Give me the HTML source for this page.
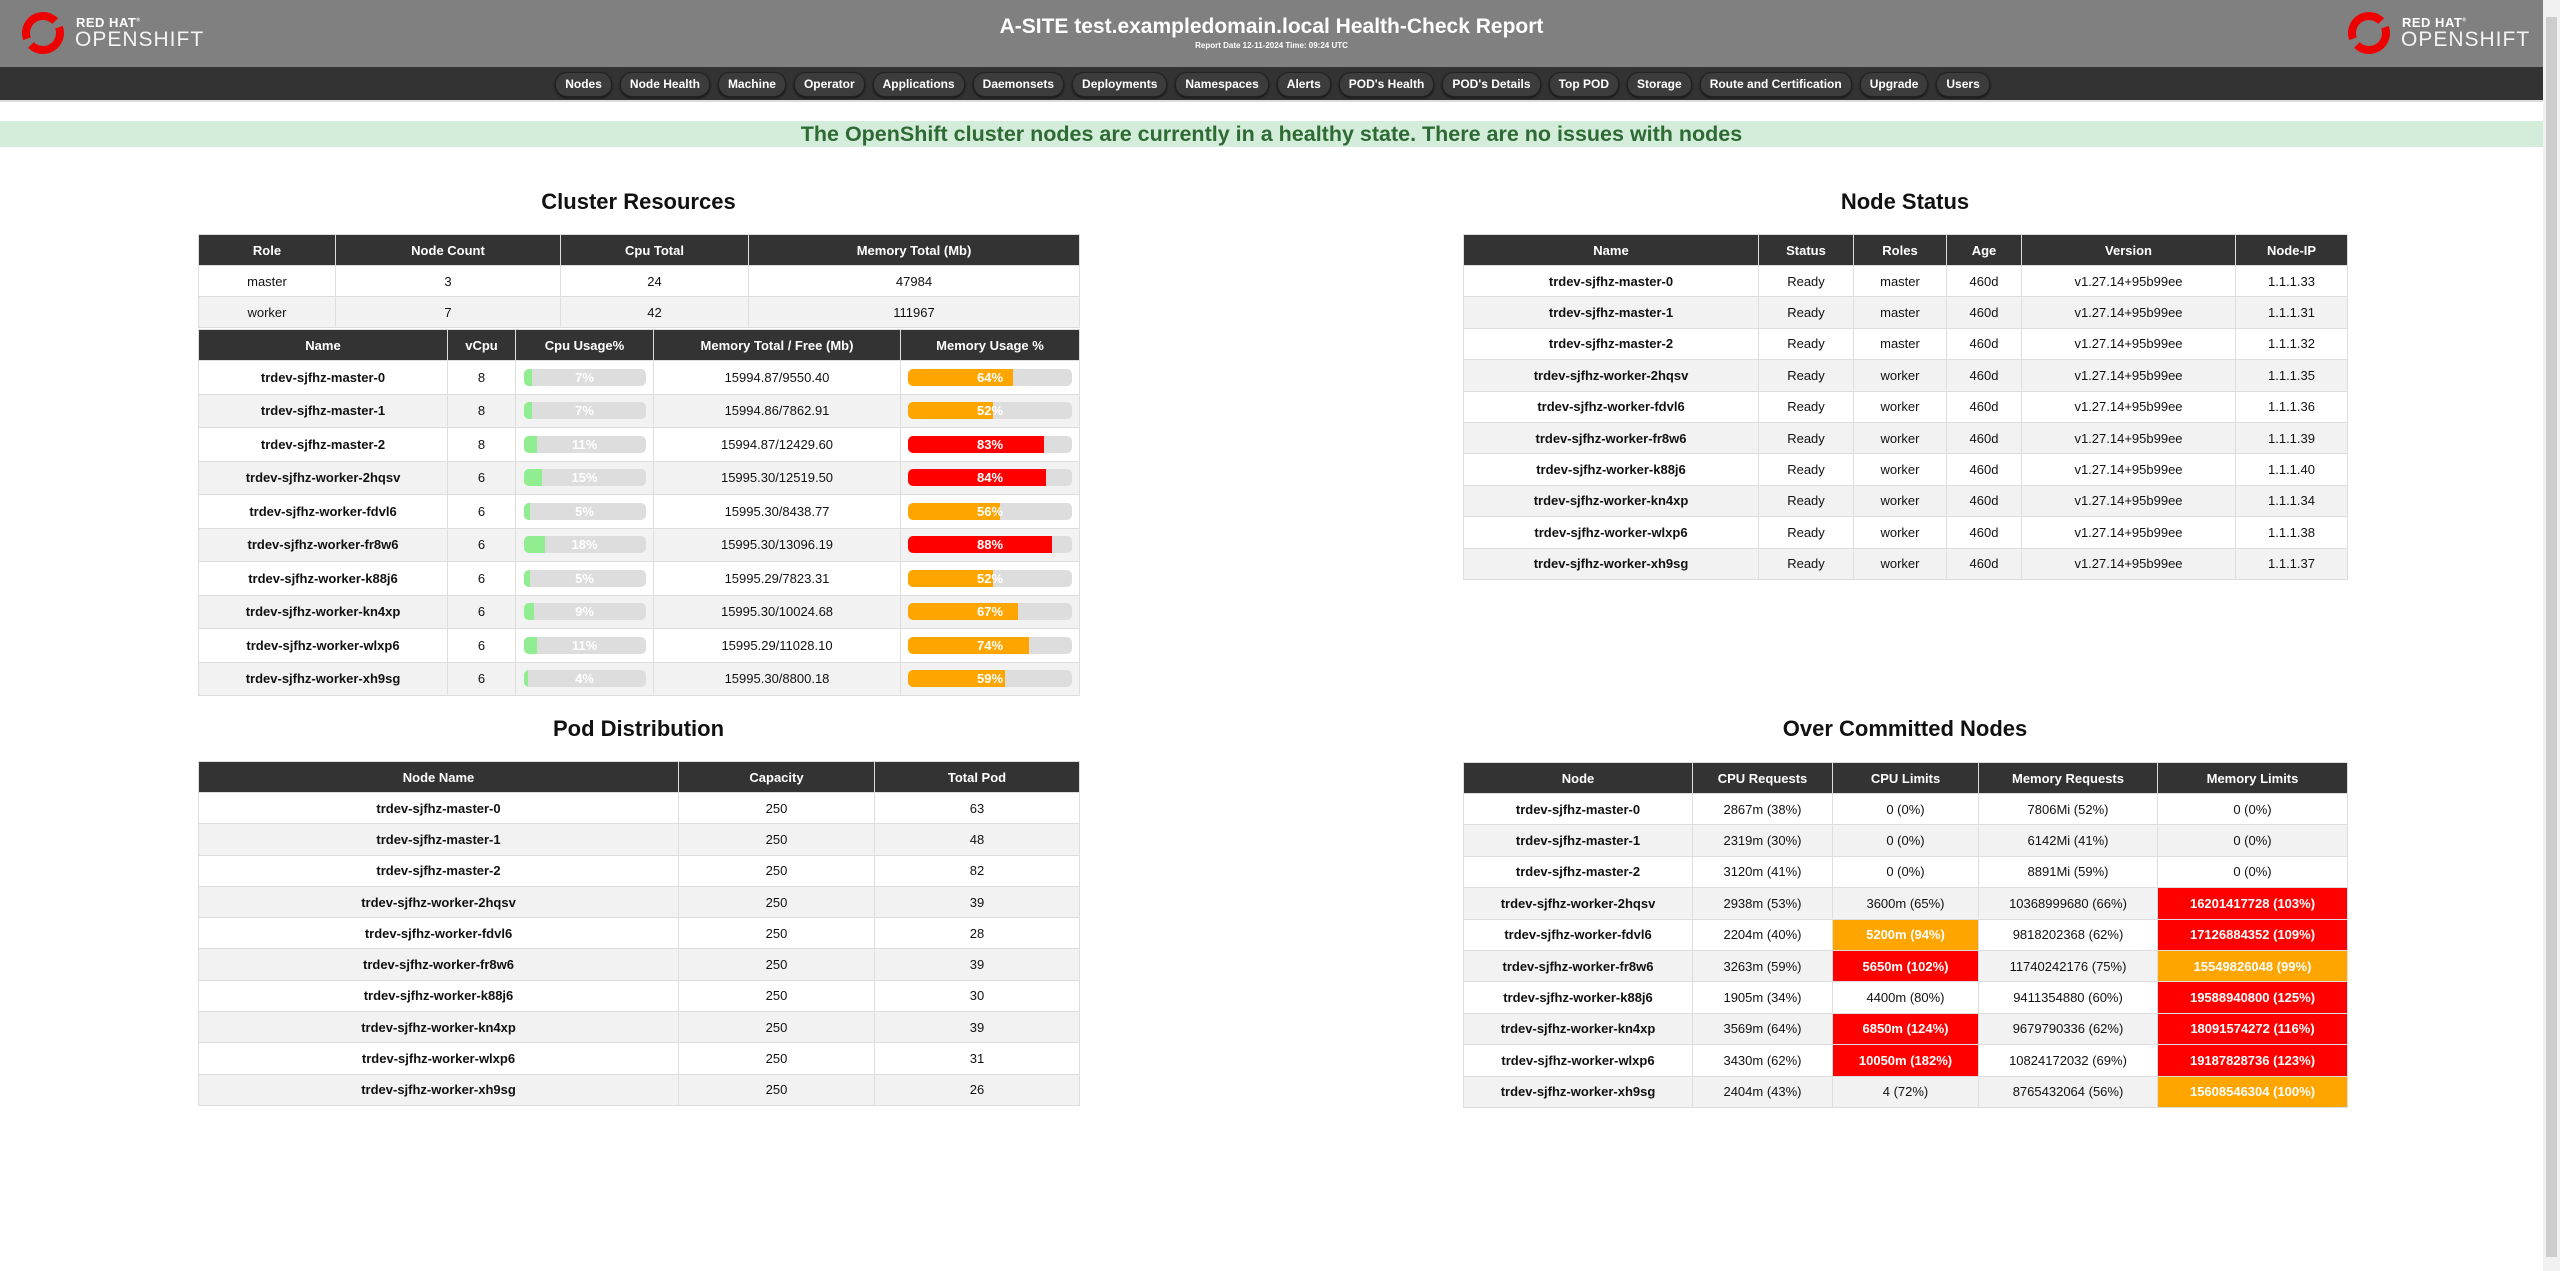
<!DOCTYPE html>
<html><head><meta charset="utf-8">
<style>
*{box-sizing:border-box;margin:0;padding:0}
html,body{width:2560px;height:1271px;overflow:hidden;background:#fff;font-family:"Liberation Sans",Arial,sans-serif;color:#111}
.hdr{position:absolute;left:0;top:0;width:2543px;height:67px;background:#808080}
.hdr h1{position:absolute;left:0;right:0;top:14px;text-align:center;color:#fff;font-size:21px;font-weight:bold;line-height:26px}
.hdr .sub{position:absolute;left:0;right:0;top:41px;text-align:center;color:#fff;font-size:8px;font-weight:bold}
.logo{position:absolute;top:10px;width:190px;height:46px}
.logo .t1{position:absolute;left:58px;top:5px;color:#fff;font-weight:bold;font-size:13px;letter-spacing:0.5px}
.logo .t2{position:absolute;left:57px;top:18px;color:#f4f4f4;font-size:21px;letter-spacing:1px;font-weight:normal}
.nav{position:absolute;left:0;top:67px;width:2543px;height:35px;background:#333;border-bottom:2px solid #ddd;display:flex;justify-content:center;gap:8px;padding-top:5px;padding-left:2px}
.nav span{height:25px;line-height:23px;padding:0 9px;border-radius:12px;background:#3c3c3c;border:1px solid #222;box-shadow:0 1px 2px #111;color:#fff;font-size:12px;font-weight:bold;white-space:nowrap}
.banner{position:absolute;left:0;top:121px;width:2543px;height:26px;background:#d4edda;color:#2e6a34;font-weight:bold;font-size:21.5px;line-height:26px;text-align:center}
.sb{position:absolute;left:2543px;top:0;width:17px;height:1271px;background:#f1f1f1}
.sb div{position:absolute;left:3px;top:17px;width:11px;height:1240px;background:#cdcdcd}
h2{position:absolute;font-size:22px;font-weight:bold;text-align:center;line-height:26px}
table{position:absolute;border-collapse:collapse;table-layout:fixed;font-size:13px}
th{background:#333;color:#fff;font-weight:bold;border:1px solid #ddd;text-align:center}
td{border:1px solid #ddd;text-align:center;background:#fff}
tr:nth-child(odd) td{background:#f2f2f2}
td.b{font-weight:bold}
.bar{width:122px;height:17px;background:#ddd;border-radius:5px;margin:0 auto;position:relative;overflow:hidden}
.bar i{position:absolute;left:0;top:0;bottom:0;background:#90ee90}
.bar b{position:relative;color:#fff;font-size:13px;line-height:17px}
.mb{width:164px}
.mb i{background:#ffa500}
.mb.red i{background:#f00}
td.r{background:#f00!important;color:#fff;font-weight:bold}
td.o{background:#ffa500!important;color:#fff;font-weight:bold}
</style></head><body>
<div class="hdr">
  <div class="logo" style="left:18px">
    <svg width="54" height="46" viewBox="0 0 54 46"><circle cx="25" cy="23" r="17" fill="none" stroke="#e00" stroke-width="8" stroke-dasharray="46 7.4" transform="rotate(-20 25 23)"/></svg>
    <div class="t1">RED HAT<sup style="font-size:5px">®</sup></div><div class="t2">OPENSHIFT</div>
  </div>
  <h1>A-SITE test.exampledomain.local Health-Check Report</h1>
  <div class="sub">Report Date 12-11-2024 Time: 09:24 UTC</div>
  <div class="logo" style="left:2344px">
    <svg width="54" height="46" viewBox="0 0 54 46"><circle cx="25" cy="23" r="17" fill="none" stroke="#e00" stroke-width="8" stroke-dasharray="46 7.4" transform="rotate(-20 25 23)"/></svg>
    <div class="t1">RED HAT<sup style="font-size:5px">®</sup></div><div class="t2">OPENSHIFT</div>
  </div>
</div>
<div class="nav"><span>Nodes</span><span>Node Health</span><span>Machine</span><span>Operator</span><span>Applications</span><span>Daemonsets</span><span>Deployments</span><span>Namespaces</span><span>Alerts</span><span>POD's Health</span><span>POD's Details</span><span>Top POD</span><span>Storage</span><span>Route and Certification</span><span>Upgrade</span><span>Users</span></div>
<div class="banner">The OpenShift cluster nodes are currently in a healthy state. There are no issues with nodes</div>
<div class="sb"><div></div></div>

<h2 style="left:198px;width:881px;top:189px">Cluster Resources</h2>
<table style="left:198px;top:234px;width:881px">
<colgroup><col style="width:137px"><col style="width:225px"><col style="width:188px"><col style="width:331px"></colgroup>
<tr style="height:31px"><th>Role</th><th>Node Count</th><th>Cpu Total</th><th>Memory Total (Mb)</th></tr>
<tr style="height:31px"><td>master</td><td>3</td><td>24</td><td>47984</td></tr>
<tr style="height:31px"><td>worker</td><td>7</td><td>42</td><td>111967</td></tr>
</table>
<table style="left:198px;top:329px;width:881px">
<colgroup><col style="width:249px"><col style="width:68px"><col style="width:138px"><col style="width:247px"><col style="width:179px"></colgroup>
<tr style="height:31px"><th>Name</th><th>vCpu</th><th>Cpu Usage%</th><th>Memory Total / Free (Mb)</th><th>Memory Usage %</th></tr>
<tr style="height:33.5px"><td class="b">trdev-sjfhz-master-0</td><td>8</td><td><div class="bar"><i style="width:7%"></i><b>7%</b></div></td><td>15994.87/9550.40</td><td><div class="bar mb"><i style="width:64%"></i><b>64%</b></div></td></tr>
<tr style="height:33.5px"><td class="b">trdev-sjfhz-master-1</td><td>8</td><td><div class="bar"><i style="width:7%"></i><b>7%</b></div></td><td>15994.86/7862.91</td><td><div class="bar mb"><i style="width:52%"></i><b>52%</b></div></td></tr>
<tr style="height:33.5px"><td class="b">trdev-sjfhz-master-2</td><td>8</td><td><div class="bar"><i style="width:11%"></i><b>11%</b></div></td><td>15994.87/12429.60</td><td><div class="bar mb red"><i style="width:83%"></i><b>83%</b></div></td></tr>
<tr style="height:33.5px"><td class="b">trdev-sjfhz-worker-2hqsv</td><td>6</td><td><div class="bar"><i style="width:15%"></i><b>15%</b></div></td><td>15995.30/12519.50</td><td><div class="bar mb red"><i style="width:84%"></i><b>84%</b></div></td></tr>
<tr style="height:33.5px"><td class="b">trdev-sjfhz-worker-fdvl6</td><td>6</td><td><div class="bar"><i style="width:5%"></i><b>5%</b></div></td><td>15995.30/8438.77</td><td><div class="bar mb"><i style="width:56%"></i><b>56%</b></div></td></tr>
<tr style="height:33.5px"><td class="b">trdev-sjfhz-worker-fr8w6</td><td>6</td><td><div class="bar"><i style="width:18%"></i><b>18%</b></div></td><td>15995.30/13096.19</td><td><div class="bar mb red"><i style="width:88%"></i><b>88%</b></div></td></tr>
<tr style="height:33.5px"><td class="b">trdev-sjfhz-worker-k88j6</td><td>6</td><td><div class="bar"><i style="width:5%"></i><b>5%</b></div></td><td>15995.29/7823.31</td><td><div class="bar mb"><i style="width:52%"></i><b>52%</b></div></td></tr>
<tr style="height:33.5px"><td class="b">trdev-sjfhz-worker-kn4xp</td><td>6</td><td><div class="bar"><i style="width:9%"></i><b>9%</b></div></td><td>15995.30/10024.68</td><td><div class="bar mb"><i style="width:67%"></i><b>67%</b></div></td></tr>
<tr style="height:33.5px"><td class="b">trdev-sjfhz-worker-wlxp6</td><td>6</td><td><div class="bar"><i style="width:11%"></i><b>11%</b></div></td><td>15995.29/11028.10</td><td><div class="bar mb"><i style="width:74%"></i><b>74%</b></div></td></tr>
<tr style="height:33.5px"><td class="b">trdev-sjfhz-worker-xh9sg</td><td>6</td><td><div class="bar"><i style="width:4%"></i><b>4%</b></div></td><td>15995.30/8800.18</td><td><div class="bar mb"><i style="width:59%"></i><b>59%</b></div></td></tr>
</table>

<h2 style="left:1463px;width:884px;top:189px">Node Status</h2>
<table style="left:1463px;top:234px;width:884px">
<colgroup><col style="width:295px"><col style="width:95px"><col style="width:93px"><col style="width:75px"><col style="width:214px"><col style="width:112px"></colgroup>
<tr style="height:31px"><th>Name</th><th>Status</th><th>Roles</th><th>Age</th><th>Version</th><th>Node-IP</th></tr>
<tr style="height:31.4px"><td class="b">trdev-sjfhz-master-0</td><td>Ready</td><td>master</td><td>460d</td><td>v1.27.14+95b99ee</td><td>1.1.1.33</td></tr>
<tr style="height:31.4px"><td class="b">trdev-sjfhz-master-1</td><td>Ready</td><td>master</td><td>460d</td><td>v1.27.14+95b99ee</td><td>1.1.1.31</td></tr>
<tr style="height:31.4px"><td class="b">trdev-sjfhz-master-2</td><td>Ready</td><td>master</td><td>460d</td><td>v1.27.14+95b99ee</td><td>1.1.1.32</td></tr>
<tr style="height:31.4px"><td class="b">trdev-sjfhz-worker-2hqsv</td><td>Ready</td><td>worker</td><td>460d</td><td>v1.27.14+95b99ee</td><td>1.1.1.35</td></tr>
<tr style="height:31.4px"><td class="b">trdev-sjfhz-worker-fdvl6</td><td>Ready</td><td>worker</td><td>460d</td><td>v1.27.14+95b99ee</td><td>1.1.1.36</td></tr>
<tr style="height:31.4px"><td class="b">trdev-sjfhz-worker-fr8w6</td><td>Ready</td><td>worker</td><td>460d</td><td>v1.27.14+95b99ee</td><td>1.1.1.39</td></tr>
<tr style="height:31.4px"><td class="b">trdev-sjfhz-worker-k88j6</td><td>Ready</td><td>worker</td><td>460d</td><td>v1.27.14+95b99ee</td><td>1.1.1.40</td></tr>
<tr style="height:31.4px"><td class="b">trdev-sjfhz-worker-kn4xp</td><td>Ready</td><td>worker</td><td>460d</td><td>v1.27.14+95b99ee</td><td>1.1.1.34</td></tr>
<tr style="height:31.4px"><td class="b">trdev-sjfhz-worker-wlxp6</td><td>Ready</td><td>worker</td><td>460d</td><td>v1.27.14+95b99ee</td><td>1.1.1.38</td></tr>
<tr style="height:31.4px"><td class="b">trdev-sjfhz-worker-xh9sg</td><td>Ready</td><td>worker</td><td>460d</td><td>v1.27.14+95b99ee</td><td>1.1.1.37</td></tr>
</table>

<h2 style="left:198px;width:881px;top:716px">Pod Distribution</h2>
<table style="left:198px;top:761px;width:881px">
<colgroup><col style="width:480px"><col style="width:196px"><col style="width:205px"></colgroup>
<tr style="height:31px"><th>Node Name</th><th>Capacity</th><th>Total Pod</th></tr>
<tr style="height:31.3px"><td class="b">trdev-sjfhz-master-0</td><td>250</td><td>63</td></tr>
<tr style="height:31.3px"><td class="b">trdev-sjfhz-master-1</td><td>250</td><td>48</td></tr>
<tr style="height:31.3px"><td class="b">trdev-sjfhz-master-2</td><td>250</td><td>82</td></tr>
<tr style="height:31.3px"><td class="b">trdev-sjfhz-worker-2hqsv</td><td>250</td><td>39</td></tr>
<tr style="height:31.3px"><td class="b">trdev-sjfhz-worker-fdvl6</td><td>250</td><td>28</td></tr>
<tr style="height:31.3px"><td class="b">trdev-sjfhz-worker-fr8w6</td><td>250</td><td>39</td></tr>
<tr style="height:31.3px"><td class="b">trdev-sjfhz-worker-k88j6</td><td>250</td><td>30</td></tr>
<tr style="height:31.3px"><td class="b">trdev-sjfhz-worker-kn4xp</td><td>250</td><td>39</td></tr>
<tr style="height:31.3px"><td class="b">trdev-sjfhz-worker-wlxp6</td><td>250</td><td>31</td></tr>
<tr style="height:31.3px"><td class="b">trdev-sjfhz-worker-xh9sg</td><td>250</td><td>26</td></tr>
</table>

<h2 style="left:1463px;width:884px;top:716px">Over Committed Nodes</h2>
<table style="left:1463px;top:762px;width:884px">
<colgroup><col style="width:229px"><col style="width:140px"><col style="width:146px"><col style="width:179px"><col style="width:190px"></colgroup>
<tr style="height:31px"><th>Node</th><th>CPU Requests</th><th>CPU Limits</th><th>Memory Requests</th><th>Memory Limits</th></tr>
<tr style="height:31.4px"><td class="b">trdev-sjfhz-master-0</td><td>2867m (38%)</td><td>0 (0%)</td><td>7806Mi (52%)</td><td>0 (0%)</td></tr>
<tr style="height:31.4px"><td class="b">trdev-sjfhz-master-1</td><td>2319m (30%)</td><td>0 (0%)</td><td>6142Mi (41%)</td><td>0 (0%)</td></tr>
<tr style="height:31.4px"><td class="b">trdev-sjfhz-master-2</td><td>3120m (41%)</td><td>0 (0%)</td><td>8891Mi (59%)</td><td>0 (0%)</td></tr>
<tr style="height:31.4px"><td class="b">trdev-sjfhz-worker-2hqsv</td><td>2938m (53%)</td><td>3600m (65%)</td><td>10368999680 (66%)</td><td class="r">16201417728 (103%)</td></tr>
<tr style="height:31.4px"><td class="b">trdev-sjfhz-worker-fdvl6</td><td>2204m (40%)</td><td class="o">5200m (94%)</td><td>9818202368 (62%)</td><td class="r">17126884352 (109%)</td></tr>
<tr style="height:31.4px"><td class="b">trdev-sjfhz-worker-fr8w6</td><td>3263m (59%)</td><td class="r">5650m (102%)</td><td>11740242176 (75%)</td><td class="o">15549826048 (99%)</td></tr>
<tr style="height:31.4px"><td class="b">trdev-sjfhz-worker-k88j6</td><td>1905m (34%)</td><td>4400m (80%)</td><td>9411354880 (60%)</td><td class="r">19588940800 (125%)</td></tr>
<tr style="height:31.4px"><td class="b">trdev-sjfhz-worker-kn4xp</td><td>3569m (64%)</td><td class="r">6850m (124%)</td><td>9679790336 (62%)</td><td class="r">18091574272 (116%)</td></tr>
<tr style="height:31.4px"><td class="b">trdev-sjfhz-worker-wlxp6</td><td>3430m (62%)</td><td class="r">10050m (182%)</td><td>10824172032 (69%)</td><td class="r">19187828736 (123%)</td></tr>
<tr style="height:31.4px"><td class="b">trdev-sjfhz-worker-xh9sg</td><td>2404m (43%)</td><td>4 (72%)</td><td>8765432064 (56%)</td><td class="o">15608546304 (100%)</td></tr>
</table>
</body></html>
